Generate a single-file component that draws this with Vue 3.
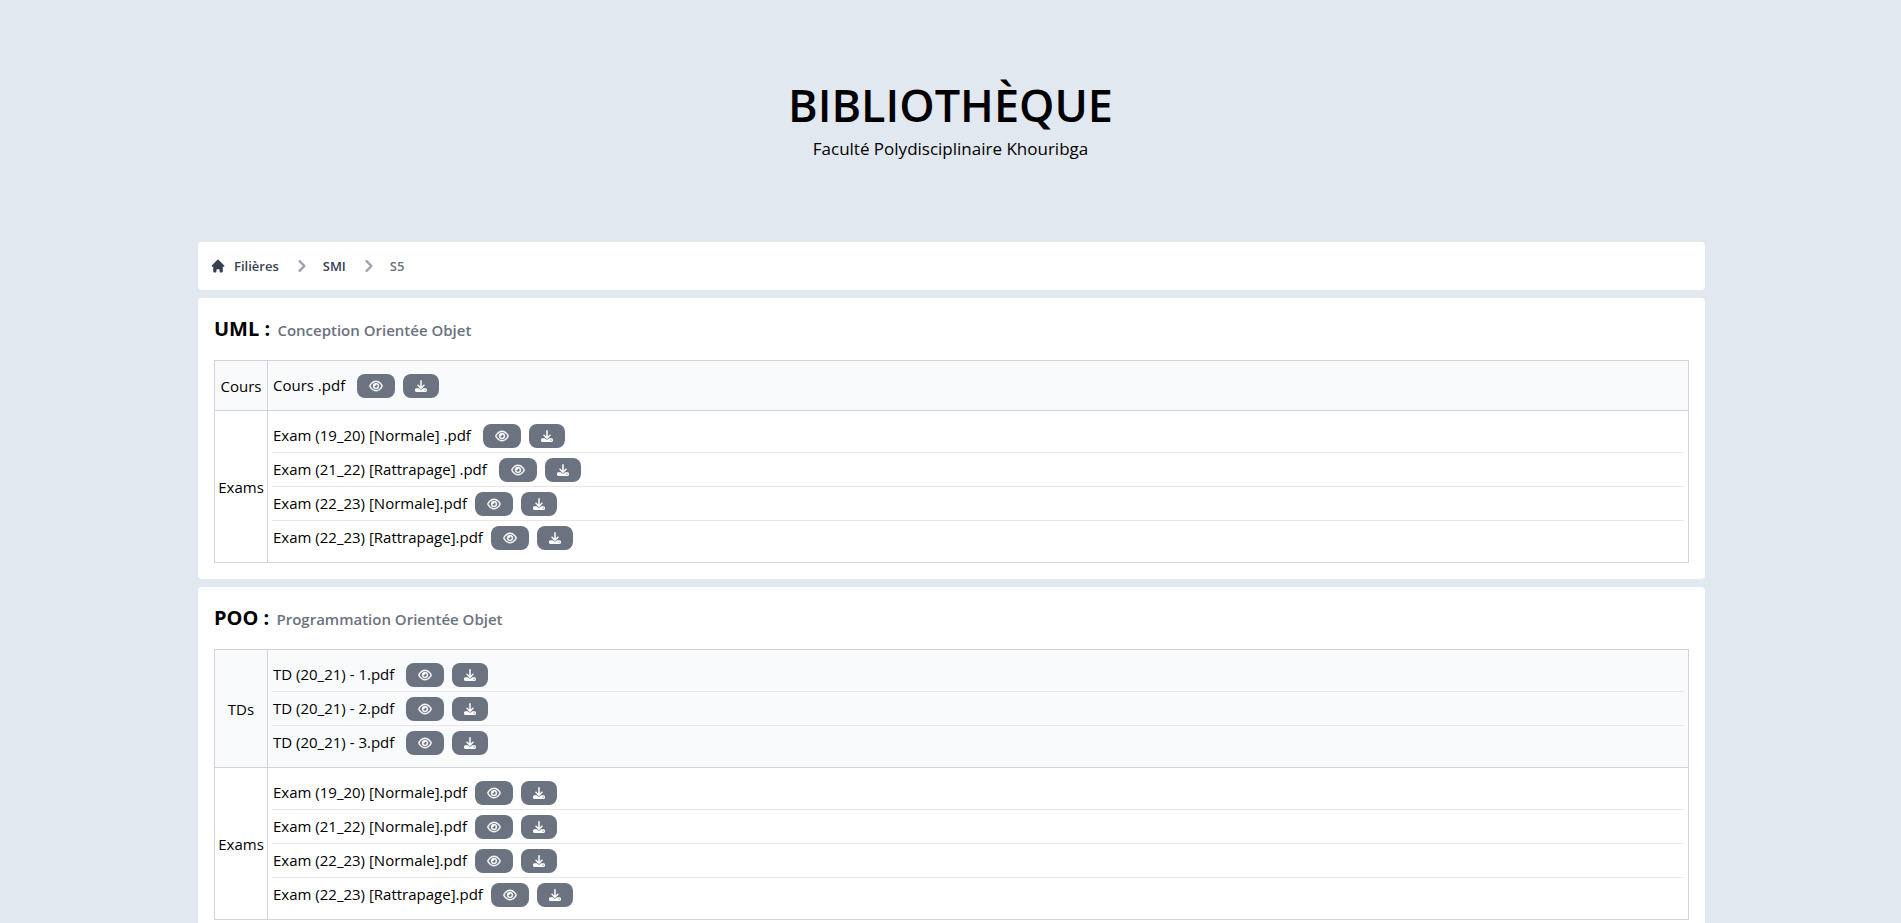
<script setup>
const subjects = [
  {
    code: 'UML',
    title: 'Conception Orientée Objet',
    groups: [
      { label: 'Cours', files: ['Cours .pdf '] },
      {
        label: 'Exams',
        files: [
          'Exam (19_20) [Normale] .pdf ',
          'Exam (21_22) [Rattrapage] .pdf ',
          'Exam (22_23) [Normale].pdf',
          'Exam (22_23) [Rattrapage].pdf',
        ],
      },
    ],
  },
  {
    code: 'POO',
    title: 'Programmation Orientée Objet',
    groups: [
      {
        label: 'TDs',
        files: ['TD (20_21) - 1.pdf ', 'TD (20_21) - 2.pdf ', 'TD (20_21) - 3.pdf '],
      },
      {
        label: 'Exams',
        files: [
          'Exam (19_20) [Normale].pdf',
          'Exam (21_22) [Normale].pdf',
          'Exam (22_23) [Normale].pdf',
          'Exam (22_23) [Rattrapage].pdf',
        ],
      },
    ],
  },
]
</script>

<template>
  <header class="hero">
    <h1>BIBLIOTHÈQUE</h1>
    <p>Faculté Polydisciplinaire Khouribga</p>
  </header>

  <main class="content">
    <nav class="card crumbs" aria-label="Fil d'Ariane">
      <a class="crumb" href="#filieres">
        <svg class="home" viewBox="0 0 20 20" aria-hidden="true">
          <path d="M10.707 2.293a1 1 0 00-1.414 0l-7 7a1 1 0 001.414 1.414L4 10.414V17a1 1 0 001 1h2a1 1 0 001-1v-2a1 1 0 011-1h2a1 1 0 011 1v2a1 1 0 001 1h2a1 1 0 001-1v-6.586l.293.293a1 1 0 001.414-1.414l-7-7z" />
        </svg>
        Filières
      </a>
      <svg class="chevron" viewBox="0 0 20 20" aria-hidden="true">
        <path fill-rule="evenodd" d="M7.293 14.707a1 1 0 010-1.414L10.586 10 7.293 6.707a1 1 0 011.414-1.414l4 4a1 1 0 010 1.414l-4 4a1 1 0 01-1.414 0z" />
      </svg>
      <a class="crumb" href="#smi">SMI</a>
      <svg class="chevron" viewBox="0 0 20 20" aria-hidden="true">
        <path fill-rule="evenodd" d="M7.293 14.707a1 1 0 010-1.414L10.586 10 7.293 6.707a1 1 0 011.414-1.414l4 4a1 1 0 010 1.414l-4 4a1 1 0 01-1.414 0z" />
      </svg>
      <span class="crumb current" aria-current="page">S5</span>
    </nav>

    <section v-for="subject in subjects" :key="subject.code" class="card subject">
      <h2>{{ subject.code }} : <small>{{ subject.title }}</small></h2>
      <table>
        <tbody>
          <tr v-for="group in subject.groups" :key="group.label">
            <th scope="row">{{ group.label }}</th>
            <td>
              <ul>
                <li v-for="file in group.files" :key="file">
                  <span class="name">{{ file }}</span>
                  <button type="button" aria-label="Voir">
                    <svg class="eye" viewBox="0 0 576 512" aria-hidden="true">
                      <path d="M288 80c-65.200 0-118.800 29.600-159.900 67.700C89.600 183.500 63 226 49.400 256c13.600 30 40.200 72.500 78.600 108.300C169.200 402.400 222.800 432 288 432s118.800-29.600 159.900-67.700C486.400 328.500 513 286 526.600 256c-13.600-30-40.200-72.500-78.600-108.300C406.800 109.600 353.200 80 288 80zM95.400 112.600C142.500 68.800 207.200 32 288 32s145.500 36.800 192.600 80.600c46.800 43.500 78.100 95.400 93 131.100 3.300 7.900 3.300 16.700 0 24.600-14.900 35.700-46.200 87.700-93 131.100C433.500 443.200 368.800 480 288 480s-145.500-36.800-192.600-80.600C48.600 356 17.300 304 2.500 268.300c-3.300-7.900-3.300-16.700 0-24.600C17.300 208 48.600 156 95.400 112.600zM288 336c44.200 0 80-35.800 80-80s-35.800-80-80-80c-.7 0-1.300 0-2 0 1.300 5.100 2 10.500 2 16 0 35.300-28.700 64-64 64-5.500 0-10.900-.7-16-2 0 .7 0 1.300 0 2 0 44.200 35.800 80 80 80zm0-208a128 128 0 1 1 0 256 128 128 0 1 1 0-256z" />
                    </svg>
                  </button>
                  <button type="button" aria-label="Télécharger">
                    <svg class="download" viewBox="0 0 512 512" aria-hidden="true">
                      <path d="M288 32c0-17.700-14.300-32-32-32s-32 14.300-32 32v242.700l-73.400-73.400c-12.500-12.500-32.800-12.500-45.300 0s-12.500 32.800 0 45.300l128 128c12.500 12.500 32.800 12.500 45.300 0l128-128c12.500-12.500 12.500-32.800 0-45.300s-32.800-12.500-45.300 0L288 274.700V32zM64 352c-35.300 0-64 28.700-64 64v32c0 35.300 28.700 64 64 64h384c35.300 0 64-28.700 64-64v-32c0-35.300-28.700-64-64-64H346.500l-45.300 45.300c-25 25-65.500 25-90.500 0L165.500 352H64zm368 56a24 24 0 1 1 0 48 24 24 0 1 1 0-48z" />
                    </svg>
                  </button>
                </li>
              </ul>
            </td>
          </tr>
        </tbody>
      </table>
    </section>
  </main>
</template>

<style>
body {
  background: #e2e8f0;
}
</style>

<style scoped>
.hero,
.content {
  font-family: 'Segoe UI', 'Open Sans', 'Noto Sans', sans-serif;
  color: #000;
}

.hero {
  padding: 81px 16px 79px;
  text-align: center;
}

.hero h1 {
  margin: 0;
  font-size: 45px;
  line-height: 48px;
  font-weight: 600;
}

.hero p {
  margin: 6px 0 0;
  font-size: 17px;
  line-height: 28px;
  font-weight: 400;
}

.content {
  display: flex;
  flex-direction: column;
  gap: 8px;
  padding: 0 196px 8px 198px;
}

.card {
  background: #fff;
  border-radius: 4px;
}

.crumbs {
  display: flex;
  align-items: center;
  height: 48px;
  padding: 0 12px;
}

.crumb {
  display: flex;
  align-items: center;
  gap: 8px;
  font-size: 13px;
  line-height: 20px;
  font-weight: 600;
  color: #374151;
  text-decoration: none;
}

.crumb.current {
  color: #6b7280;
}

.home {
  width: 16px;
  height: 16px;
  fill: currentColor;
}

.chevron {
  width: 24px;
  height: 24px;
  margin: 0 9px 0 11px;
  fill: #9ca3af;
}

.subject {
  padding: 16px;
}

.subject h2 {
  margin: 0 0 16px;
  font-size: 20px;
  line-height: 30px;
  font-weight: 700;
}

.subject small {
  margin-left: 2px;
  font-size: 15px;
  line-height: 20px;
  font-weight: 600;
  color: #6b7280;
}

table {
  width: 100%;
  border-collapse: collapse;
  font-size: 15px;
  line-height: 24px;
}

th,
td {
  border: 1px solid #d1d5db;
  font-weight: 400;
}

th {
  width: 52px;
  padding: 0;
  text-align: center;
}

td {
  padding: 8px 4px;
}

tr:nth-child(odd) {
  background: #f8fafc;
}

ul {
  margin: 0;
  padding: 0;
  list-style: none;
}

li {
  display: flex;
  align-items: center;
  gap: 8px;
  padding: 5px 0 4px;
}

li + li {
  border-top: 1px solid #e5e7eb;
}

.name {
  padding-left: 1px;
  line-height: 22px;
  padding-bottom: 2px;
  white-space: pre;
}

button {
  display: flex;
  align-items: center;
  height: 24px;
  padding: 0 12px;
  border: 0;
  border-radius: 8px;
  background: #6b7280;
  color: #fff;
}

button svg {
  height: 12px;
  fill: currentColor;
}

.eye {
  width: 14px;
  stroke: currentColor;
  stroke-width: 16;
}

.download {
  width: 12px;
}
</style>
